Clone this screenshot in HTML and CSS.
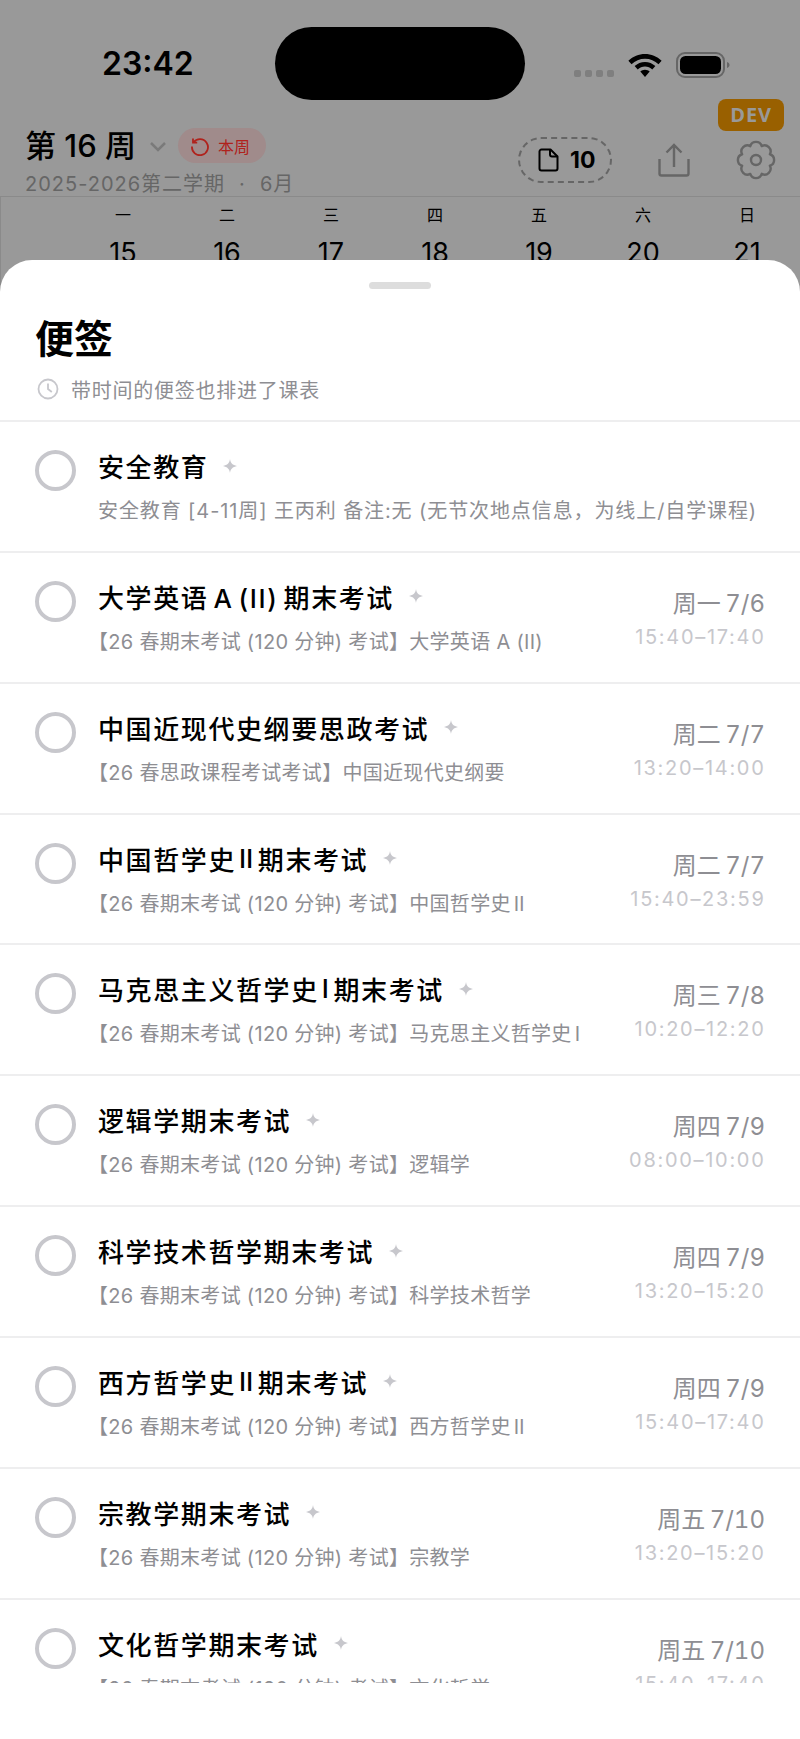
FILE: index.html

```html
<!DOCTYPE html>
<html lang="zh">
<head>
  <meta charset="UTF-8" />
  <title>便签</title>
  <link rel="stylesheet" href="styles.css">
</head>
<body>
  <div class="phone">
    <!-- 状态栏 -->
    <div class="status">
      <span class="clock">23:42</span>
      <div class="island"></div>
      <div class="dots"><i></i><i></i><i></i><i></i></div>
      <svg class="wifi" width="36" height="27" viewBox="0 0 34 26"><path d="M17 3C11 3 5.500 5.300 1 9.500l3 3.200C7.500 9.300 12 7.400 17 7.400s9.500 1.900 13 5.300l3-3.200C28.500 5.300 23 3 17 3z"/><path d="M17 10.500c-3.800 0-7.300 1.500-10 4l3 3.200c1.900-1.800 4.300-2.800 7-2.800s5.100 1 7 2.800l3-3.200c-2.700-2.500-6.200-4-10-4z"/><path d="M17 18c-1.800 0-3.300.7-4.500 1.800L17 25l4.500-5.200C20.300 18.700 18.800 18 17 18z"/></svg>
      <svg class="battery" width="56" height="26" viewBox="0 0 56 26"><rect x="1" y="1" width="47" height="24" rx="8" fill="none" stroke="#666" stroke-width="2"/><rect x="4" y="4" width="41" height="18" rx="5.500" fill="#000"/><path d="M51 10v6c1.500-.4 2.500-1.600 2.500-3s-1-2.600-2.500-3z" fill="#666"/></svg>
    </div>

    <div class="dev-row"><span class="dev">DEV</span></div>

    <!-- 周信息 -->
    <header class="week-bar">
      <div class="week-info">
        <div class="week-line">
          <h1>第 16 周</h1>
          <svg class="chevron" width="18" height="12" viewBox="0 0 18 12"><path d="M2 2l7 7 7-7" fill="none" stroke="#7a7a7a" stroke-width="2.500"/></svg>
          <span class="this-week">
            <svg width="20" height="20" viewBox="0 0 20 20" fill="none" stroke="#b0221c" stroke-width="1.800"><path d="M3.500 6.500A8 8 0 1 1 2 10.500"/><path d="M3 2.500v4.200h4.200"/></svg>
            本周
          </span>
        </div>
        <p class="term">2025-2026第二学期<span class="sep">·</span>6月</p>
      </div>
      <div class="week-tools">
        <span class="note-count">
          <svg width="24" height="24" viewBox="0 0 24 24" fill="none" stroke="#000" stroke-width="2" stroke-linejoin="round"><path d="M3.500 3.500a2 2 0 0 1 2-2h9l7 7v12a2 2 0 0 1-2 2h-14a2 2 0 0 1-2-2z"/><path d="M14 1.500v5a2 2 0 0 0 2 2h5.500"/></svg>
          10
        </span>
        <svg class="share" width="32" height="34" viewBox="0 0 32 34" fill="none" stroke="#666" stroke-width="2.400"><path d="M16 24V2.500M8.500 9.500 16 2l7.500 7.500"/><path d="M1.500 16v14.500a2 2 0 0 0 2 2h25a2 2 0 0 0 2-2V16"/></svg>
        <svg class="gear" width="40" height="40" viewBox="0 0 40 40" fill="none" stroke="#666" stroke-width="2.400" stroke-linejoin="round"><circle cx="20" cy="20" r="5"/><path d="M14.260 6.140A6 6 0 0 1 25.740 6.140 6 6 0 0 1 33.860 14.260 6 6 0 0 1 33.860 25.740 6 6 0 0 1 25.740 33.860 6 6 0 0 1 14.260 33.860 6 6 0 0 1 6.140 25.740 6 6 0 0 1 6.140 14.260 6 6 0 0 1 14.260 6.140z"/></svg>
      </div>
    </header>

    <!-- 课表表头 -->
    <div class="cal-head">
      <span></span><span>一</span><span>二</span><span>三</span><span>四</span><span>五</span><span>六</span><span>日</span>
      <span></span><b>15</b><b>16</b><b>17</b><b>18</b><b>19</b><b>20</b><b>21</b>
    </div>

    <!-- 便签面板 -->
    <section class="sheet">
      <div class="handle"></div>
      <h2>便签</h2>
      <p class="hint">
        <svg width="22" height="22" viewBox="0 0 22 22" fill="none" stroke="#c7c7cc" stroke-width="1.800"><circle cx="11" cy="11" r="9.500"/><path d="M11 5.500V11l3.800 3"/></svg>
        带时间的便签也排进了课表
      </p>
      <div class="list">
        <div class="row">
          <span class="check"></span>
          <div class="body">
            <div class="title">安全教育<svg class="spark" viewBox="0 0 14 14"><path d="M7 0c.6 4 2.500 6 7 7-4.500 1-6.400 3-7 7-.6-4-2.500-6-7-7 4.500-1 6.400-3 7-7z"/></svg></div>
            <div class="sub sub-long">安全教育 [4-11周] 王丙利 备注:无 (无节次地点信息，为线上/自学课程)</div>
          </div>
        </div>
        <div class="row">
          <span class="check"></span>
          <div class="body">
            <div class="title tight">大学英语 A (II) 期末考试<svg class="spark" viewBox="0 0 14 14"><path d="M7 0c.6 4 2.500 6 7 7-4.500 1-6.400 3-7 7-.6-4-2.500-6-7-7 4.500-1 6.400-3 7-7z"/></svg></div>
            <div class="sub"><span class="open">【</span>26 春期末考试 (120 分钟) 考试】大学英语 A (II)</div>
          </div>
          <div class="when"><div class="date">周一 7/6</div><div class="time">15:40–17:40</div></div>
        </div>
        <div class="row">
          <span class="check"></span>
          <div class="body">
            <div class="title">中国近现代史纲要思政考试<svg class="spark" viewBox="0 0 14 14"><path d="M7 0c.6 4 2.500 6 7 7-4.500 1-6.400 3-7 7-.6-4-2.500-6-7-7 4.500-1 6.400-3 7-7z"/></svg></div>
            <div class="sub"><span class="open">【</span>26 春思政课程考试考试】中国近现代史纲要</div>
          </div>
          <div class="when"><div class="date">周二 7/7</div><div class="time">13:20–14:00</div></div>
        </div>
        <div class="row">
          <span class="check"></span>
          <div class="body">
            <div class="title">中国哲学史<span class="roman">Ⅱ</span>期末考试<svg class="spark" viewBox="0 0 14 14"><path d="M7 0c.6 4 2.500 6 7 7-4.500 1-6.400 3-7 7-.6-4-2.500-6-7-7 4.500-1 6.400-3 7-7z"/></svg></div>
            <div class="sub"><span class="open">【</span>26 春期末考试 (120 分钟) 考试】中国哲学史<span class="roman">Ⅱ</span></div>
          </div>
          <div class="when"><div class="date">周二 7/7</div><div class="time">15:40–23:59</div></div>
        </div>
        <div class="row">
          <span class="check"></span>
          <div class="body">
            <div class="title">马克思主义哲学史<span class="roman">Ⅰ</span>期末考试<svg class="spark" viewBox="0 0 14 14"><path d="M7 0c.6 4 2.500 6 7 7-4.500 1-6.400 3-7 7-.6-4-2.500-6-7-7 4.500-1 6.400-3 7-7z"/></svg></div>
            <div class="sub"><span class="open">【</span>26 春期末考试 (120 分钟) 考试】马克思主义哲学史<span class="roman">Ⅰ</span></div>
          </div>
          <div class="when"><div class="date">周三 7/8</div><div class="time">10:20–12:20</div></div>
        </div>
        <div class="row">
          <span class="check"></span>
          <div class="body">
            <div class="title">逻辑学期末考试<svg class="spark" viewBox="0 0 14 14"><path d="M7 0c.6 4 2.500 6 7 7-4.500 1-6.400 3-7 7-.6-4-2.500-6-7-7 4.500-1 6.400-3 7-7z"/></svg></div>
            <div class="sub"><span class="open">【</span>26 春期末考试 (120 分钟) 考试】逻辑学</div>
          </div>
          <div class="when"><div class="date">周四 7/9</div><div class="time">08:00–10:00</div></div>
        </div>
        <div class="row">
          <span class="check"></span>
          <div class="body">
            <div class="title">科学技术哲学期末考试<svg class="spark" viewBox="0 0 14 14"><path d="M7 0c.6 4 2.500 6 7 7-4.500 1-6.400 3-7 7-.6-4-2.500-6-7-7 4.500-1 6.400-3 7-7z"/></svg></div>
            <div class="sub"><span class="open">【</span>26 春期末考试 (120 分钟) 考试】科学技术哲学</div>
          </div>
          <div class="when"><div class="date">周四 7/9</div><div class="time">13:20–15:20</div></div>
        </div>
        <div class="row">
          <span class="check"></span>
          <div class="body">
            <div class="title">西方哲学史<span class="roman">Ⅱ</span>期末考试<svg class="spark" viewBox="0 0 14 14"><path d="M7 0c.6 4 2.500 6 7 7-4.500 1-6.400 3-7 7-.6-4-2.500-6-7-7 4.500-1 6.400-3 7-7z"/></svg></div>
            <div class="sub"><span class="open">【</span>26 春期末考试 (120 分钟) 考试】西方哲学史<span class="roman">Ⅱ</span></div>
          </div>
          <div class="when"><div class="date">周四 7/9</div><div class="time">15:40–17:40</div></div>
        </div>
        <div class="row">
          <span class="check"></span>
          <div class="body">
            <div class="title">宗教学期末考试<svg class="spark" viewBox="0 0 14 14"><path d="M7 0c.6 4 2.500 6 7 7-4.500 1-6.400 3-7 7-.6-4-2.500-6-7-7 4.500-1 6.400-3 7-7z"/></svg></div>
            <div class="sub"><span class="open">【</span>26 春期末考试 (120 分钟) 考试】宗教学</div>
          </div>
          <div class="when"><div class="date">周五 7/10</div><div class="time">13:20–15:20</div></div>
        </div>
        <div class="row">
          <span class="check"></span>
          <div class="body">
            <div class="title">文化哲学期末考试<svg class="spark" viewBox="0 0 14 14"><path d="M7 0c.6 4 2.500 6 7 7-4.500 1-6.400 3-7 7-.6-4-2.500-6-7-7 4.500-1 6.400-3 7-7z"/></svg></div>
            <div class="sub"><span class="open">【</span>26 春期末考试 (120 分钟) 考试】文化哲学</div>
          </div>
          <div class="when"><div class="date">周五 7/10</div><div class="time">15:40–17:40</div></div>
        </div>
      </div>
    </section>
  </div>
</body>
</html>
```

FILE: styles.css

```css
* { box-sizing: border-box; }
body { margin: 0; font-family: Inter, "Noto Sans CJK SC", sans-serif; background: #fff; }
h1, h2, p { margin: 0; }

.phone { position: relative; width: 800px; height: 1739px; overflow: hidden; background: #999; }

/* status bar */
.status { display: flex; align-items: flex-start; height: 99px; padding-top: 27px; }
.clock { width: 92px; margin: 16px 0 0 102px; font-size: 32px; line-height: 42px; font-weight: 600; color: #000; }
.island { width: 250px; height: 73px; margin-left: 81px; border-radius: 37px; background: #000; }
.dots { display: flex; gap: 4.500px; margin: 43px 0 0 49px; }
.dots i { width: 6.500px; height: 6.500px; border-radius: 2px; background: #7f7f7f; }
.wifi { margin: 24px 0 0 13px; }
.battery { margin: 25px 0 0 13px; }

.dev-row { display: flex; justify-content: flex-end; height: 32px; padding-right: 16px; }
.dev { width: 66px; height: 32px; border-radius: 8px; background: #996000; color: #999; font: 700 20px/32px "Open Sans", sans-serif; text-align: center; letter-spacing: .8px; }

/* week */
.week-bar { display: flex; justify-content: space-between; height: 68px; padding: 0 24px 0 25px; margin-top: -3px; }
.week-line { display: flex; align-items: center; height: 35px; }
h1 { font-size: 31px; line-height: 35px; font-weight: 500; color: #000; white-space: nowrap; }
.chevron { margin: 2px 0 0 13px; }
.this-week { display: flex; align-items: center; gap: 8px; width: 88px; height: 35px; margin-left: 11px; padding-left: 12px; border-radius: 18px; background: #a08b8b; color: #b0221c; font-size: 16px; }
.term { margin-top: 6px; font-size: 20px; line-height: 30px; letter-spacing: 1px; color: #666; white-space: nowrap; }
.sep { margin: 0 14px; }

.week-tools { display: flex; align-items: center; margin-top: 8px; height: 48px; }
.note-count { display: flex; align-items: center; gap: 10px; width: 94px; height: 46px; padding-left: 16px; margin-left: 3px; border: 2px dashed #666; border-radius: 23px; font-size: 23px; font-weight: 700; color: #000; }
.share { margin-left: 46px; }
.gear { margin-left: 46px; }

/* calendar head */
.cal-head { display: grid; grid-template-columns: 70px repeat(7, 104px); grid-template-rows: 36px 40px; height: 100px; border-top: 1px solid #8a8a8a; border-left: 1px solid #8a8a8a; text-align: center; color: #000; }
.cal-head span { font-size: 16px; line-height: 24px; padding-top: 6px; }
.cal-head b { font-size: 27px; font-weight: 400; line-height: 32px; padding-top: 4px; }

/* sheet */
.sheet { position: absolute; left: 0; right: 0; top: 260px; bottom: 0; background: #fff; border-radius: 32px 32px 0 0; }
.handle { width: 62px; height: 7px; margin: 22px auto 0; border-radius: 4px; background: #ddd; }
.sheet h2 { margin: 25px 0 0 35px; font-size: 39px; line-height: 50px; font-weight: 700; color: #000; }
.hint { display: flex; align-items: center; gap: 12px; margin: 11px 0 0 37px; height: 28px; font-size: 20px; letter-spacing: .75px; color: #8e8e93; }

.list { height: 1263px; margin-top: 17px; overflow: hidden; border-top: 2px solid #eeeeef; }
.row { display: flex; align-items: flex-start; height: 130.850px; padding: 28px 35px 0 35px; border-bottom: 2px solid #eeeeef; }
.check { flex: none; width: 41px; height: 41px; border: 4px solid #c7c7cc; border-radius: 50%; }
.body { flex: 1; min-width: 0; margin-left: 22px; }
.title { display: flex; align-items: center; height: 36px; margin-top: -2.500px; font-size: 26px; font-weight: 500; letter-spacing: 1.600px; color: #000; white-space: nowrap; }
.tight { word-spacing: -3.500px; }
.roman { margin: 0 3px; }
.spark { width: 14px; height: 14px; margin: 0 0 0 15px; fill: #c7c7cc; }
.sub { margin-top: 13.500px; font-size: 20px; line-height: 28px; letter-spacing: .3px; color: #8e8e93; white-space: nowrap; }
.sub-long { letter-spacing: .9px; }
.open { margin-left: -10px; }
.when { flex: none; text-align: right; padding-top: 6px; }
.date { font-size: 24px; line-height: 34px; word-spacing: -2px; font-variant-numeric: tabular-nums; color: #8e8e93; }
.time { margin: 1px -.5px 0 0; font-size: 20px; line-height: 30px; letter-spacing: 1.700px; color: #c7c7cc; }
```
